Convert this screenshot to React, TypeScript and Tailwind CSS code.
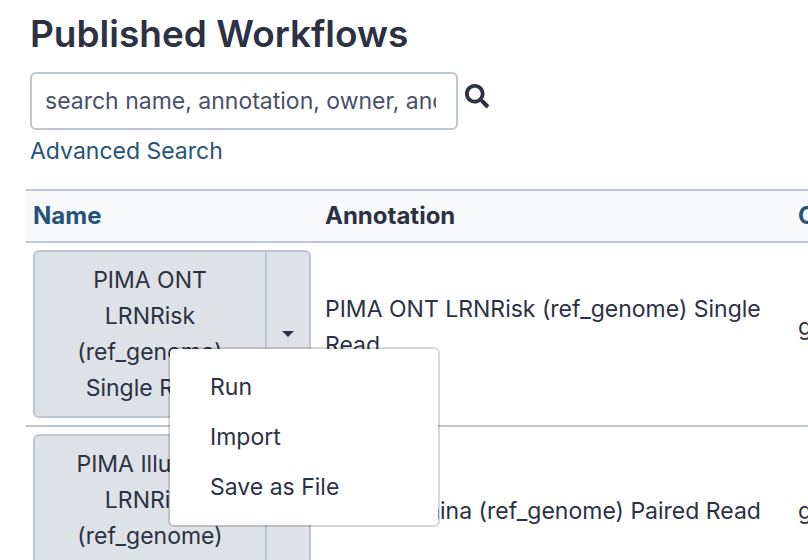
import { FaSearch } from "react-icons/fa";

type Workflow = { name: string; annotation: string; owner: string; menuOpen: boolean };

const workflows: Workflow[] = [
  {
    name: "PIMA ONT LRNRisk (ref_genome) Single Read",
    annotation: "PIMA ONT LRNRisk (ref_genome) Single Read",
    owner: "galaxy",
    menuOpen: true,
  },
  {
    name: "PIMA Illumina LRNRisk (ref_genome) Paired Read",
    annotation: "PIMA Illumina (ref_genome) Paired Read",
    owner: "galaxy",
    menuOpen: false,
  },
];

function ActionMenu() {
  return (
    <ul className="absolute left-[133px] top-[95px] z-10 w-[272px] rounded-md border-2 border-black/15 bg-white bg-clip-padding py-[13px]">
      {["Run", "Import", "Save as File"].map((label) => (
        <li key={label}>
          <button type="button" className="block w-full px-10 py-[7px] text-left">
            {label}
          </button>
        </li>
      ))}
    </ul>
  );
}

function WorkflowButton({ workflow }: { workflow: Workflow }) {
  return (
    <div className="relative flex rounded-md border-2 border-[#bdc6d0] bg-[#dee2e6]">
      <button type="button" className="flex-1 px-8 py-[10px] text-center">
        {workflow.name}
      </button>
      <button
        type="button"
        aria-label={`Actions for ${workflow.name}`}
        className="flex w-11 items-center justify-center border-l-2 border-[#bdc6d0]"
      >
        <svg width="12" height="6" viewBox="0 0 12 6" fill="currentColor" aria-hidden="true">
          <path d="M0 0H12L6 6Z" />
        </svg>
      </button>
      {workflow.menuOpen && <ActionMenu />}
    </div>
  );
}

export default function App() {
  return (
    <main className="h-screen overflow-hidden bg-white pl-[26px] pt-2 font-['Inter','Liberation_Sans',sans-serif] text-[23px] leading-9 text-[#2c3143]">
      <div className="px-1">
        <h1 className="text-[37px] font-semibold leading-[52px]">Published Workflows</h1>
        <form className="mt-3 flex items-start gap-[7px]">
          <input
            type="text"
            aria-label="Search workflows"
            placeholder="search name, annotation, owner, and tags"
            className="h-[58px] w-[428px] rounded-md border-2 border-[#bdc6d0] bg-white pl-[13px] pr-5 placeholder:text-[#4a5069] placeholder:opacity-100"
          />
          <button type="button" aria-label="Search" className="mt-3">
            <FaSearch size={24} />
          </button>
        </form>
        <a href="#advanced" className="mt-[3px] inline-block text-[#25537b]">
          Advanced Search
        </a>
      </div>
      <table className="mt-5 w-full min-w-[1200px] table-fixed border-collapse text-left">
        <colgroup>
          <col className="w-[292px]" />
          <col className="w-[473px]" />
          <col />
        </colgroup>
        <thead className="text-[24px]">
          <tr className="border-y-2 border-[#bdc6d0] bg-[#f8f9fa]">
            <th className="px-[7px] py-[7px] font-bold">
              <a href="#name" className="text-[#25537b]">Name</a>
            </th>
            <th className="px-[7px] py-[7px] font-bold">Annotation</th>
            <th className="px-[7px] py-[7px] font-bold">
              <a href="#owner" className="text-[#25537b]">Owner</a>
            </th>
          </tr>
        </thead>
        <tbody>
          {workflows.map((workflow) => (
            <tr key={workflow.name} className="border-b-2 border-[#bdc6d0]">
              <td className="p-[7px]">
                <WorkflowButton workflow={workflow} />
              </td>
              <td className="px-[7px] pb-[14px]">{workflow.annotation}</td>
              <td className="px-[7px] pb-[14px]">{workflow.owner}</td>
            </tr>
          ))}
        </tbody>
      </table>
    </main>
  );
}
